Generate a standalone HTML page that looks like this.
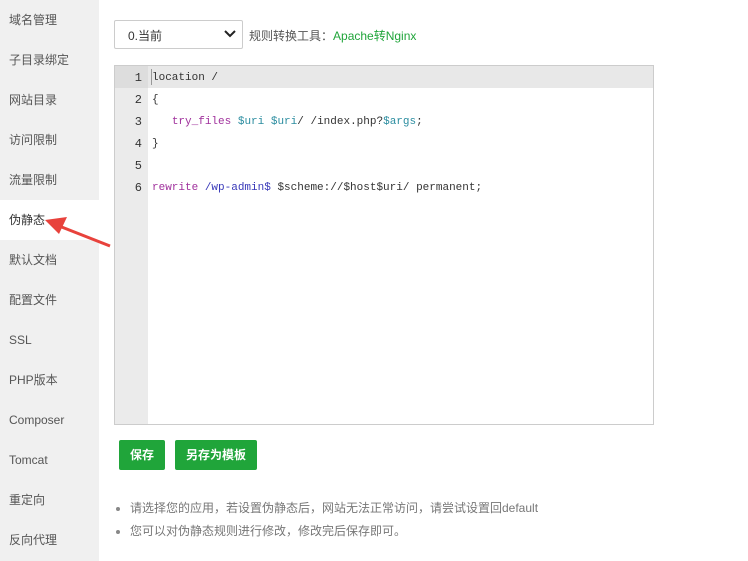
<!DOCTYPE html>
<html><head><meta charset="utf-8"><style>
body{margin:0;width:748px;height:561px;background:#fff;font-family:"Liberation Sans","Noto Sans CJK SC",sans-serif;font-size:12px;color:#333;position:relative;overflow:hidden}
.side{position:absolute;left:0;top:0;width:99px;height:561px;background:#f0f0f0}
.side div{height:40px;line-height:40px;padding-left:9px;color:#555;font-size:12px}
.side .on{background:#fff;color:#333}
.sel{position:absolute;left:114px;top:20px;width:127px;height:27px;border:1px solid #ccc;border-radius:2px;box-sizing:content-box}
.sel span{position:absolute;left:13px;top:6px;font-size:12px;color:#333}
.sel svg{position:absolute;right:6px;top:9px}
.tool{position:absolute;left:249px;top:27px;color:#555}
.tool b{color:#20a53a;font-weight:normal}
.ed{position:absolute;left:114px;top:65px;width:538px;height:358px;border:1px solid #ccc;background:#fff}
.gut{position:absolute;left:0;top:0;width:33px;height:100%;background:#ebebeb}
.hl{position:absolute;left:0;top:0;width:100%;height:22px;background:#e8e8e8}
.ln{position:absolute;left:0;width:27px;text-align:right;color:#333;font-family:"Liberation Mono",monospace;font-size:12px}
.code{position:absolute;left:37px;font-family:"Liberation Mono",monospace;font-size:11px;color:#333;white-space:pre}
.k{color:#a0309c}.v{color:#2b8da0}.p{color:#3737b8}
.cur{position:absolute;left:36px;top:3px;width:1px;height:16px;background:#999}
.btn{position:absolute;top:440px;height:30px;line-height:30px;background:#20a53a;color:#fff;border-radius:2px;font-weight:bold;text-align:center;font-size:12px}
ul{position:absolute;left:116px;top:498px;margin:0;padding:0 0 0 14px;color:#777;font-size:12px}
li{height:23px;line-height:20px}
li::marker{color:#888}
</style></head><body>
<div class="side">
<div>域名管理</div><div>子目录绑定</div><div>网站目录</div><div>访问限制</div><div>流量限制</div><div class="on">伪静态</div><div>默认文档</div><div>配置文件</div><div>SSL</div><div>PHP版本</div><div>Composer</div><div>Tomcat</div><div>重定向</div><div>反向代理</div>
</div>
<svg style="position:absolute;left:40px;top:212px" width="75" height="40"><line x1="70" y1="34" x2="14" y2="12" stroke="#e8423c" stroke-width="3"/><polygon points="5,8 27,5 19,22" fill="#e8423c"/></svg>
<div class="sel"><span>0.当前</span><svg width="12" height="8"><path d="M1 1L6 6L11 1" stroke="#222" stroke-width="2" fill="none"/></svg></div>
<div class="tool">规则转换工具：<b>Apache转Nginx</b></div>
<div class="ed">
<div class="hl"></div><div class="gut"></div>
<div class="hl" style="width:33px;background:#ddd"></div>
<div class="cur"></div>
<div class="ln" style="top:5px">1</div><div class="ln" style="top:27px">2</div><div class="ln" style="top:49px">3</div><div class="ln" style="top:71px">4</div><div class="ln" style="top:93px">5</div><div class="ln" style="top:115px">6</div>
<div class="code" style="top:6px">location /</div>
<div class="code" style="top:28px">{</div>
<div class="code" style="top:50px">   <span class="k">try_files</span> <span class="v">$uri</span> <span class="v">$uri</span>/ /index.php?<span class="v">$args</span>;</div>
<div class="code" style="top:72px">}</div>
<div class="code" style="top:116px"><span class="k">rewrite</span> <span class="p">/wp-admin$</span> $scheme://$host$uri/ permanent;</div>
</div>
<div class="btn" style="left:119px;width:46px">保存</div>
<div class="btn" style="left:175px;width:82px">另存为模板</div>
<ul><li>请选择您的应用，若设置伪静态后，网站无法正常访问，请尝试设置回default</li><li>您可以对伪静态规则进行修改，修改完后保存即可。</li></ul>
</body></html>
